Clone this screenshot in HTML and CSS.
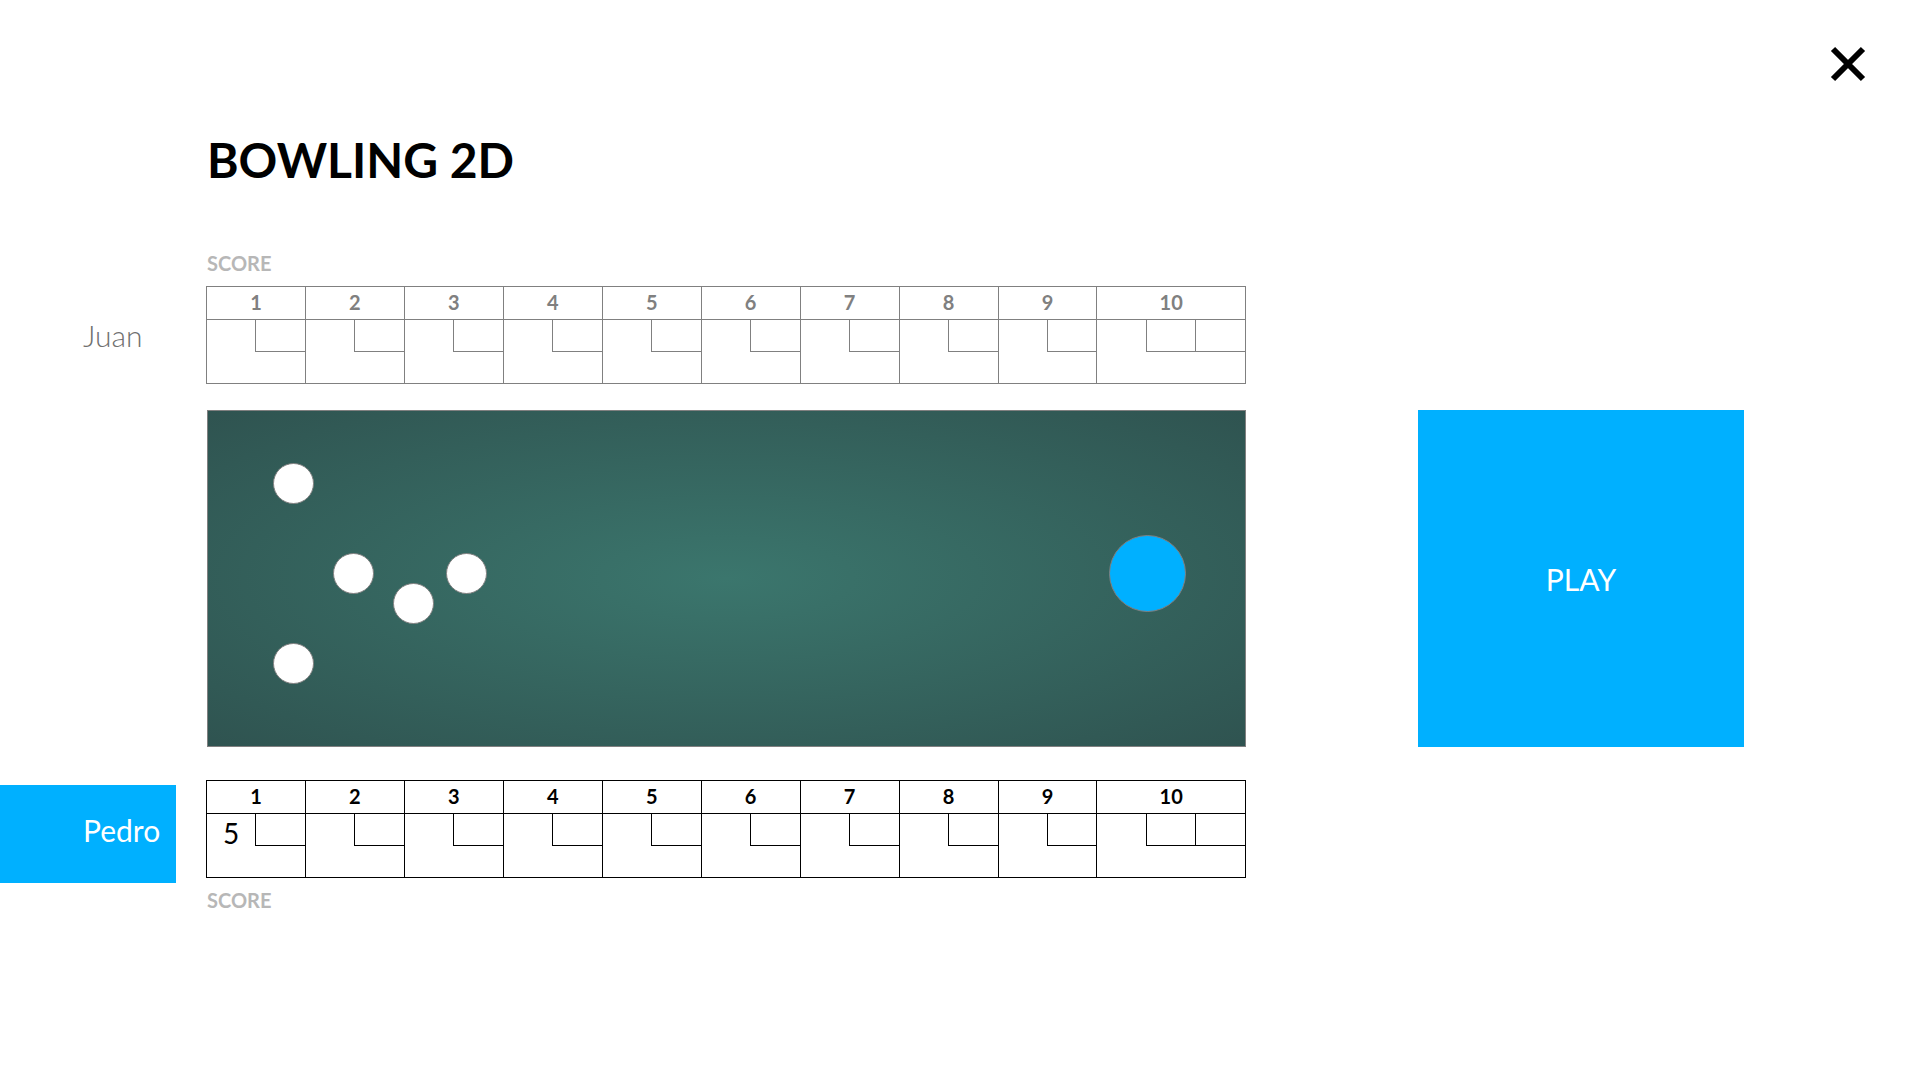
FILE: index.html
```html
<!DOCTYPE html>
<html lang="en">
<head>
<meta charset="utf-8">
<meta name="viewport" content="width=device-width, initial-scale=1">
<title>Bowling 2D</title>
<link rel="stylesheet" href="styles.css">
</head>
<body>
<header class="topbar">
  <button class="close" type="button" aria-label="Close">
    <svg class="close-icon" viewBox="0 0 36 36" aria-hidden="true"><path d="M3 3 33 33M33 3 3 33"/></svg>
  </button>
</header>
<main class="game">
  <h1 class="title">BOWLING 2D</h1>

  <h2 class="score-label score-label-top">SCORE</h2>
  <div class="player">Juan</div>
  <table class="sheet" id="sheet-juan" aria-label="Juan's score"></table>

  <svg class="lane" viewBox="0 0 1039 337" role="img" aria-label="Bowling lane">
    <rect class="lane-edge" x="0.5" y="0.5" width="1038" height="336"/>
    <circle class="pin" cx="86.5" cy="73.5" r="20"/>
    <circle class="pin" cx="146.5" cy="163.5" r="20"/>
    <circle class="pin" cx="206.5" cy="193.5" r="20"/>
    <circle class="pin" cx="259.5" cy="163.5" r="20"/>
    <circle class="pin" cx="86.5" cy="253.5" r="20"/>
    <circle class="ball" cx="940.5" cy="163.5" r="38"/>
  </svg>
  <button class="play" type="button">PLAY</button>

  <div class="player player-active">Pedro</div>
  <table class="sheet sheet-active" id="sheet-pedro" aria-label="Pedro's score"></table>
  <h2 class="score-label score-label-bottom">SCORE</h2>
</main>
<script src="sheet.js"></script>
</body>
</html>
```
FILE: styles.css
```css
* {
  box-sizing: border-box;
}

body {
  margin: 0;
  background: #fff;
  color: #000;
  font-family: Lato, "Open Sans", sans-serif;
}

button {
  border: 0;
  padding: 0;
  font: inherit;
  cursor: pointer;
}

.topbar {
  display: flex;
  justify-content: flex-end;
  padding: 46px 54px 0 0;
}

.close {
  display: block;
  background: none;
}

.close-icon {
  display: block;
  width: 36px;
  height: 36px;
  fill: none;
  stroke: #000;
  stroke-width: 6;
}

.game {
  display: grid;
  grid-template-columns: 206px minmax(0, 1040fr) 172px minmax(0, 326fr) 176px;
  align-items: start;
  padding-top: 48px;
}

.title {
  grid-column: 2 / -1;
  margin: 0;
  padding-left: 1px;
  font-size: 48px;
  line-height: 60px;
  font-weight: 700;
}

.score-label {
  grid-column: 2;
  margin: 0;
  padding-left: 1px;
  color: #b7b7b7;
  font-size: 20px;
  line-height: 24px;
  font-weight: 700;
}

.score-label-top {
  margin: 61px 0 11px;
}

.score-label-bottom {
  margin-top: 10px;
}

.player {
  grid-column: 1;
  width: 176px;
  height: 98px;
  padding-left: 83px;
  color: #707070;
  font-size: 30px;
  line-height: 98px;
  font-weight: 300;
}

/* The active name block hangs a little below its sheet. */
.player-active {
  margin: 5px 0 -5px;
  background: #00b0ff;
  color: #fff;
  font-weight: 400;
  line-height: 90px;
}

.sheet {
  grid-column: 2;
  width: 100%;
  table-layout: fixed;
  border-collapse: collapse;
  color: #808080;
}

.sheet-active {
  color: #000;
}

.sheet th,
.sheet td {
  padding: 0;
  border: 1px solid currentColor;
  text-align: center;
}

.sheet th {
  height: 33px;
  padding-bottom: 2px;
  font-size: 20px;
  line-height: 24px;
  font-weight: 700;
}

.sheet td {
  height: 32px;
  padding-top: 7px;
  font-size: 28px;
  line-height: 24px;
}

.sheet .first-roll {
  border-bottom: 0;
}

.sheet .frame-total {
  border-top: 0;
}

.lane {
  grid-column: 2;
  display: block;
  width: calc(100% - 1px);
  margin: 26px 0 33px 1px;
  background: radial-gradient(#3b766d, #2f5350);
}

.lane-edge {
  fill: none;
  stroke: #808080;
}

.pin,
.ball {
  fill: #fff;
  stroke: #808080;
}

.ball {
  fill: #00b0ff;
}

.play {
  grid-column: 4;
  align-self: stretch;
  margin: 26px 0 33px;
  background: #00b0ff;
  color: #fff;
  font-size: 30px;
}
```
FILE: sheet.js
```js
const FRAMES = 10;

function cell(tag, span, className, text) {
  const el = document.createElement(tag);
  el.colSpan = span;
  if (className) el.className = className;
  el.textContent = text || "";
  return el;
}

function drawSheet(id, rolls) {
  const table = document.getElementById(id);
  const head = table.createTHead().insertRow();
  const body = table.createTBody();
  const rollRow = body.insertRow();
  const totalRow = body.insertRow();
  let roll = 0;

  for (let frame = 1; frame <= FRAMES; frame++) {
    const slots = frame === FRAMES ? 3 : 2;
    const th = cell("th", slots, "", String(frame));
    th.scope = "colgroup";
    head.append(th);
    for (let i = 0; i < slots; i++) {
      rollRow.append(cell("td", 1, i === 0 ? "first-roll" : "", rolls[roll++]));
    }
    totalRow.append(cell("td", slots, "frame-total"));
  }
}

drawSheet("sheet-juan", []);
drawSheet("sheet-pedro", ["5"]);
```
